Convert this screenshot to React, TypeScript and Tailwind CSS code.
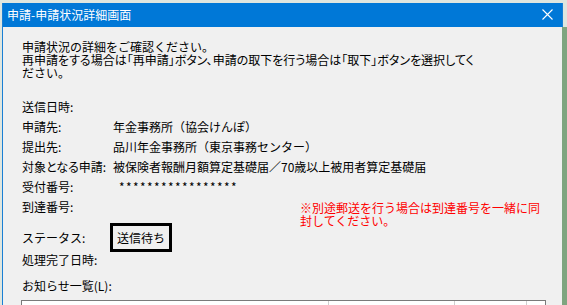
import React from 'react';

const font = "font-['Noto_Sans_CJK_JP','Noto_Sans',sans-serif]";

const Row: React.FC<{ label: string; value?: React.ReactNode; className?: string }> = ({ label, value, className }) => (
  <div className={`flex items-center h-[20px] ${className ?? ''}`}>
    <div className="w-[91px] shrink-0 whitespace-nowrap [font-feature-settings:'palt']">{label}</div>
    <div className="whitespace-nowrap">{value}</div>
  </div>
);

const App: React.FC = () => {
  return (
    <div className={`relative w-[567px] h-[305px] overflow-hidden bg-[#dfe6df] ${font} text-[12px] leading-[12px] text-black`}>
      {/* background strip on the right (another window behind) */}
      <div className="absolute right-0 top-[27px] w-[5px] h-[280px] bg-[#7fa57f]" />

      <div className="ml-[2px] mt-[3px] w-[561px] h-[320px] border border-[#1a7fd4] border-t-0 bg-[#f0f0f0]">
        {/* title bar */}
        <div className="flex items-center justify-between h-[24px] bg-[#0078d7] pl-[4px] pr-[9px] text-white">
          <span className="whitespace-nowrap">申請-申請状況詳細画面</span>
          <svg width="11" height="11" viewBox="0 0 11 11" className="mb-[1px]">
            <path d="M0.5 0.5 L10.5 10.5 M10.5 0.5 L0.5 10.5" stroke="white" strokeWidth="1.1" fill="none" />
          </svg>
        </div>

        <div className="pl-[19px] pt-[13px]">
          {/* description */}
          <div className="leading-[13px]">
            <div className="whitespace-nowrap">申請状況の詳細をご確認ください。</div>
            <div className="whitespace-nowrap [font-feature-settings:'palt']">
              再申請をする場合は「再申請」ボタン、申請の取下を行う場合は「取下」ボタンを選択してく
            </div>
            <div className="whitespace-nowrap">ださい。</div>
          </div>

          {/* details */}
          <div className="mt-[18px]">
            <Row label="送信日時:" />
            <Row label="申請先:" value="年金事務所（協会けんぽ）" />
            <Row label="提出先:" value="品川年金事務所（東京事務センター）" />
            <Row label="対象となる申請:" value="被保険者報酬月額算定基礎届／70歳以上被用者算定基礎届" />
            <Row label="受付番号:" value={<span className="ml-[6px] tracking-[1.4px]">*****************</span>} />
            <div className="flex items-start h-[20px]">
              <div className="w-[91px] shrink-0 leading-[20px] whitespace-nowrap">到達番号:</div>
              <div className="ml-[187px] mt-[4px] text-[#ff0000] leading-[13px] whitespace-nowrap">
                ※別途郵送を行う場合は到達番号を一緒に同
                <br />
                封してください。
              </div>
            </div>

            <div className="flex items-center mt-[6px] h-[29px]">
              <div className="w-[88px] shrink-0 whitespace-nowrap">ステータス:</div>
              <div className="flex items-center h-[29px] border-[3px] border-black px-[4px] whitespace-nowrap">
                送信待ち
              </div>
            </div>
            <div className="flex items-center h-[16px]">
              <div className="whitespace-nowrap">処理完了日時:</div>
            </div>

            <div className="flex items-center h-[20px] mt-[8px]">
              <div className="whitespace-nowrap">お知らせ一覧(L):</div>
            </div>

            {/* notice list */}
            <div className="mt-[4px] ml-[-1px] w-[525px] h-[40px] border border-[#7a7a7a] bg-white">
              <div className="flex h-[20px]">
                <div className="w-[307px] border-r border-[#cfcfcf]" />
                <div className="w-[126px] border-r border-[#cfcfcf]" />
                <div className="w-[72px] border-r border-[#cfcfcf]" />
                <div className="flex-1" />
              </div>
            </div>
          </div>
        </div>
      </div>
    </div>
  );
};

export default App;
